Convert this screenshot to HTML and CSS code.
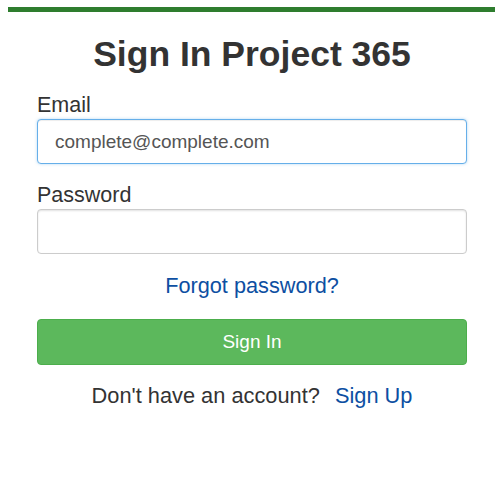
FILE: index.html
```html
<!DOCTYPE html>
<html lang="en">

<head>
    <meta charset="UTF-8">
    <meta name="viewport" content="width=device-width, initial-scale=1.0">
    <title>Sign In</title>
    <link rel="stylesheet" href="styles.css">
</head>

<body>

    <div class="page">
        <h1 class="title">Sign In Project 365</h1>
        <form class="signin">
            <label class="field">
                <span>Email</span>
                <input type="email" class="focused" value="complete@complete.com">
            </label>
            <label class="field">
                <span>Password</span>
                <input type="password">
            </label>
            <a href="#" class="forgot">Forgot password?</a>
            <button type="submit">Sign In</button>
            <p class="signup">Don't have an account? <a href="#">Sign Up</a></p>
        </form>
    </div>

</body>

</html>
```

FILE: styles.css
```css
* {
    margin: 0;
    padding: 0;
    box-sizing: border-box;
}

html,
body {
    width: 100%;
    height: 100%;
    background-color: #fff;
    font-family: "Liberation Sans", Arial, Helvetica, sans-serif;
    color: #333;
}

.page {
    margin: 7px 5px 0 8px;
    border-top: 5px solid #2e7d2e;
    padding: 0 28px 0 29px;
}

.title {
    text-align: center;
    font-size: 35.5px;
    font-weight: 700;
    line-height: 39px;
    margin-top: 23px;
    margin-bottom: 19px;
}

.signin {
    display: flex;
    flex-direction: column;
}

.field {
    display: flex;
    flex-direction: column;
    margin-bottom: 19px;
}

.field span {
    font-size: 21.5px;
    line-height: 24px;
    margin-bottom: 2px;
}

.field input {
    height: 45px;
    padding: 0 17px;
    font-family: inherit;
    font-size: 19px;
    color: #555;
    border: 1px solid #ccc;
    border-radius: 4px;
    outline: 0;
    box-shadow: inset 0 1px 2px rgba(0, 0, 0, 0.12);
}

.field input.focused {
    border-color: #66afe9;
    box-shadow: inset 0 1px 1px rgba(0, 0, 0, .075), 0 0 3px rgba(102, 175, 233, .5);
}

.forgot {
    align-self: center;
    font-size: 21.7px;
    color: #0d4fa2;
    text-decoration: none;
    margin-top: 0;
    margin-bottom: 20px;
}

.signin button {
    height: 46px;
    border: 1px solid #4cae4c;
    border-radius: 4px;
    background-color: #5cb85c;
    color: #fff;
    font-family: inherit;
    font-size: 19px;
    cursor: pointer;
}

.signup {
    text-align: center;
    font-size: 21.8px;
    margin-top: 18px;
}

.signup a {
    color: #0d4fa2;
    text-decoration: none;
    margin-left: 9px;
}
```
